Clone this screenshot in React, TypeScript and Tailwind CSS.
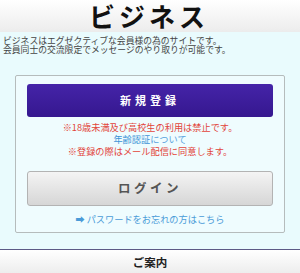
const jp = "font-['Noto_Sans_CJK_JP','Noto_Sans',sans-serif]";

export default function App() {
  return (
    <div className={`flex h-[273px] w-[300px] flex-col overflow-hidden bg-[#e9fbfd] ${jp}`}>
      <header className="flex h-[32px] items-center justify-center bg-gradient-to-b from-white to-[#ececec] pr-[2px]">
        <h1 className="text-[26px] font-bold leading-[28px] tracking-[4px] text-[#111]">ビジネス</h1>
      </header>

      <p className="mt-[4px] pl-[3px] text-[8.8px] leading-[9px] text-[#444]">
        ビジネスはエグゼクティブな会員様の為のサイトです。
        <br />
        会員同士の交流限定でメッセージのやり取りが可能です。
      </p>

      <section className="mx-[15px] mt-[21px] flex h-[158px] flex-col items-center rounded-[2px] border border-[#b5bcbc] bg-[#effcfe] px-[11px] pt-[8px]">
        <button className="flex h-[33px] w-full items-center justify-center rounded-[3px] bg-gradient-to-b from-[#4524a8] to-[#35178f] text-[11px] font-bold tracking-[4px] text-white">
          新規登録
        </button>
        <div className="mt-[4px] flex flex-col items-center text-[9.2px] leading-[12px]">
          <span className="block h-[12px] text-[#e2443a]">※18歳未満及び高校生の利用は禁止です。</span>
          <span className="block h-[12px] text-[#3d93d6]">
            年齢認証<span className="text-[#5aa3dd]">について</span>
          </span>
          <span className="block h-[12px] text-[#e2443a]">※登録の際はメール配信に同意します。</span>
        </div>
        <button className="mt-[14px] flex h-[35px] w-full items-center justify-center rounded-[3px] border border-[#b3b3b3] bg-gradient-to-b from-[#f4f4f4] to-[#d6d6d6] text-[12.5px] font-bold tracking-[3.5px] text-[#555]">
          ログイン
        </button>
        <a className="mt-[7px] block h-[12px] text-[9.2px] leading-[12px] text-[#4a9bd8]">
          <span className="mr-[2px]">➡</span>パスワードをお忘れの方はこちら
        </a>
      </section>

      <div className="mt-[16px] h-px bg-[#5c5a86]" />
      <footer className="flex flex-1 items-center justify-center bg-gradient-to-b from-white to-[#ededed] pt-[2px]">
        <span className="text-[11.5px] font-bold text-[#222]">ご案内</span>
      </footer>
    </div>
  );
}
